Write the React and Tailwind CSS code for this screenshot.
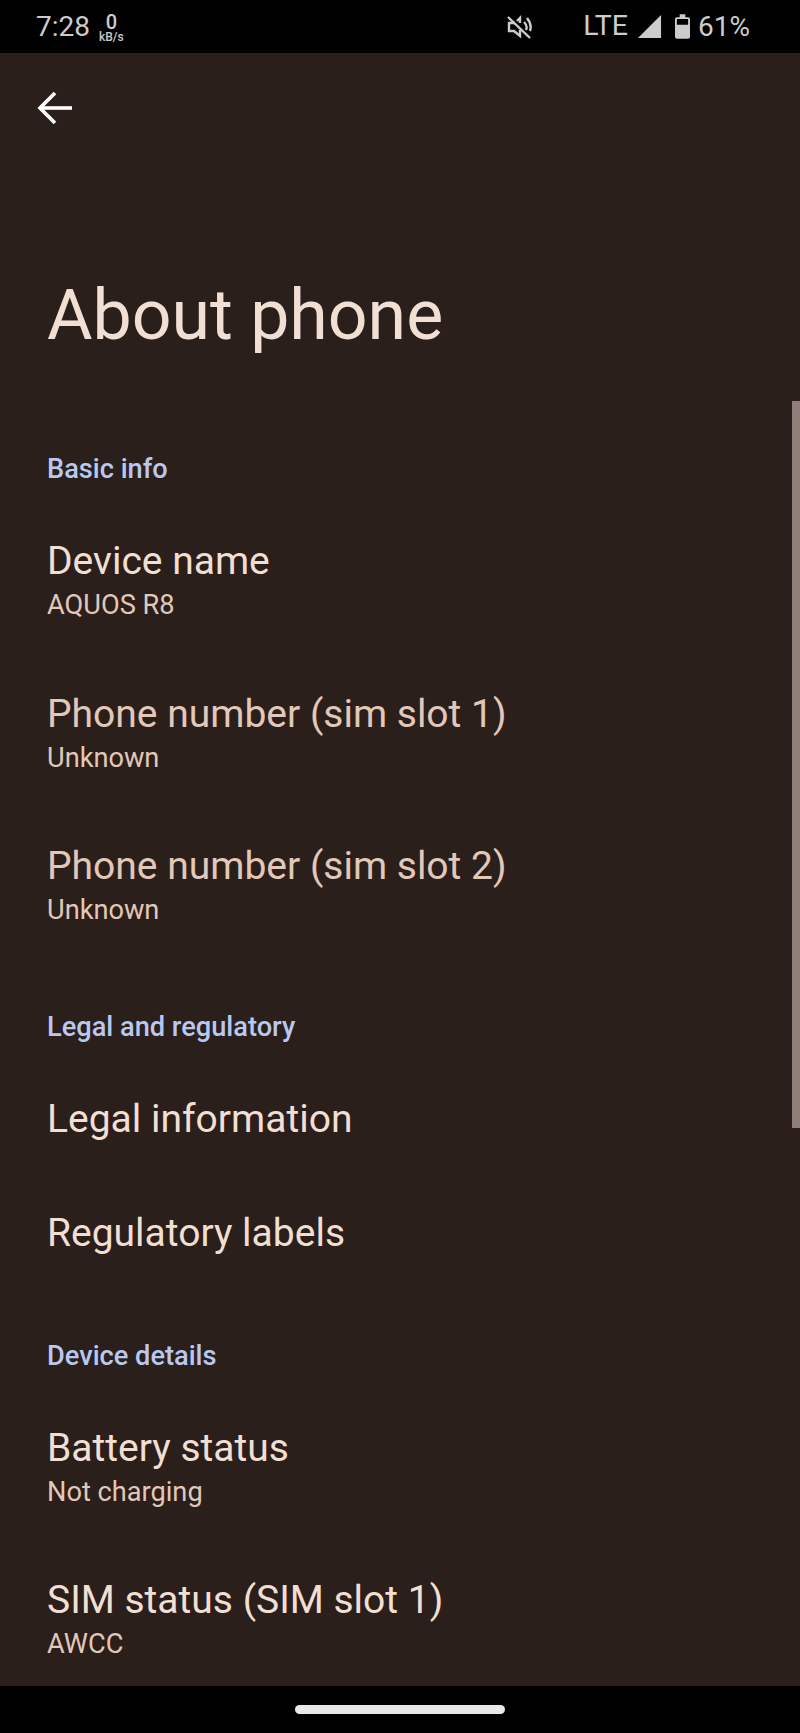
import React from "react";

const Section = ({ title, children, className }) => (
    <div className={className}>
        <p className="pb-[19px] text-[27.2px] leading-[32px] font-medium text-[#b9c8f0]">{title}</p>
        {children}
    </div>
);

const Row = ({ title, sub, dim }) => (
    <div className="py-[32.25px]">
        <p className={`text-[39px] leading-[50px] ${dim ? "text-[#e2c8b9]" : "text-[#f2dfd3]"}`}>{title}</p>
        {sub && <p className="text-[27.2px] leading-[38px] text-[#e2c8b9]">{sub}</p>}
    </div>
);

const App = () => {
    return (
        <div className="w-[800px] h-[1733px] flex flex-col bg-black overflow-hidden font-['Roboto',sans-serif]">
            {/* status bar */}
            <div className="h-[53px] shrink-0 flex items-center pl-[36px] pr-[50px] text-[#cccccc]">
                <span className="text-[28px] leading-none">7:28</span>
                <div className="ml-[9px] mt-[3px] flex flex-col items-center">
                    <span className="text-[20px] leading-[17px] font-medium">0</span>
                    <span className="text-[12px] leading-[12px] font-medium">kB/s</span>
                </div>
                <svg className="ml-auto" width="26" height="26" viewBox="0 0 26 26" fill="none" stroke="#cccccc" strokeWidth="2.4">
                    <path d="M2 3 L24 24" />
                    <path d="M9 9 H3 V17 H8 L14 22 V16 M14 9 V4 L11 7" />
                    <path d="M18 8 C21 11 21 14 20 16 M21 4 C25 9 25 14 24 17" />
                </svg>
                <span className="ml-[51px] text-[28.5px] leading-none">LTE</span>
                <svg className="ml-[9px]" width="25" height="25" viewBox="0 0 26 26" fill="#cccccc">
                    <path d="M25 1 V25 H1 Z" />
                </svg>
                <svg className="ml-[13px]" width="15" height="25" viewBox="0 0 16 26" fill="#cccccc">
                    <path d="M5 0 H11 V3 H14 C15 3 16 4 16 5 V24 C16 25 15 26 14 26 H2 C1 26 0 25 0 24 V5 C0 4 1 3 2 3 H5 Z M2 5 V11 H14 V5 Z" fillRule="evenodd" />
                </svg>
                <span className="ml-[8px] text-[28px] leading-none">61%</span>
            </div>

            {/* page */}
            <div className="relative flex-1 bg-[#2a1f1b] px-[47px] overflow-hidden">
                <svg className="absolute left-[37px] mt-[38px]" width="36" height="34" viewBox="0 0 36 34" fill="none" stroke="#ffffff" strokeWidth="3.6">
                    <path d="M3 17 H35" />
                    <path d="M18 2 L3 17 L18 32" />
                </svg>

                <h1 className="pt-[222px] text-[69.8px] leading-[80px] text-[#f2dfd3]">About phone</h1>

                <Section title="Basic info" className="mt-[98px]">
                    <Row title="Device name" sub="AQUOS R8" />
                    <Row title="Phone number (sim slot 1)" sub="Unknown" dim />
                    <Row title="Phone number (sim slot 2)" sub="Unknown" dim />
                </Section>

                <Section title="Legal and regulatory" className="mt-[49px]">
                    <Row title="Legal information" />
                    <Row title="Regulatory labels" />
                </Section>

                <Section title="Device details" className="mt-[49px]">
                    <Row title="Battery status" sub="Not charging" />
                    <Row title="SIM status (SIM slot 1)" sub="AWCC" />
                </Section>

                {/* scrollbar */}
                <div className="absolute right-0 top-[348px] w-[8px] h-[727px] bg-[#8f7f78]" />
            </div>

            {/* nav bar */}
            <div className="h-[47px] shrink-0 flex items-center justify-center">
                <div className="w-[210px] h-[9px] rounded-full bg-[#e8e8e8]" />
            </div>
        </div>
    );
};

export default App;
